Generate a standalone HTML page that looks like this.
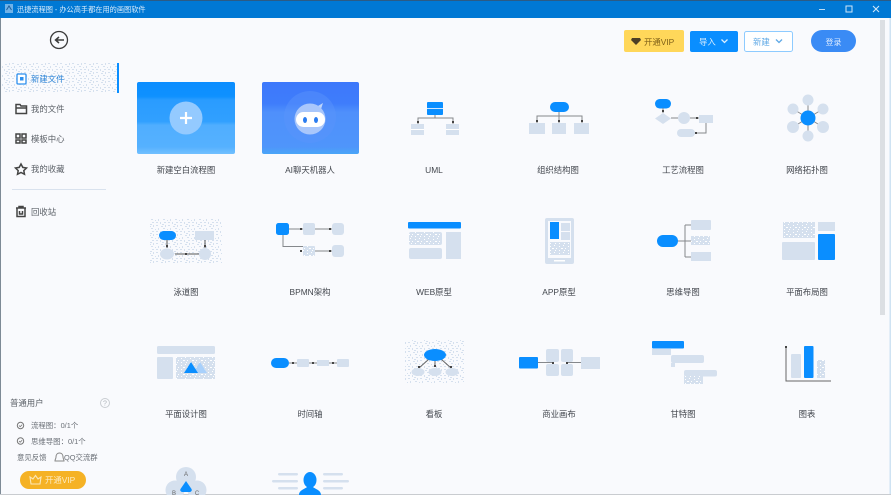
<!DOCTYPE html>
<html lang="zh"><head><meta charset="utf-8"><title>迅捷流程图</title>
<style>
html,body{margin:0;padding:0;width:891px;height:495px;overflow:hidden;background:#f9fafd}
svg{display:block;font-family:"Liberation Sans","Noto Sans CJK SC",sans-serif;filter:blur(.35px)}
.l{font-size:8.400px;fill:#43474e;text-anchor:middle}
.n{font-size:8.400px;fill:#5d6269}
.s{font-size:7.400px;fill:#6b7077}
.b{fill:#d5e0ee}.a{fill:#0a8eff}
.w{stroke:#85888c;stroke-width:1;fill:none}
</style></head><body>
<svg width="891" height="495" viewBox="0 0 891 495" xmlns="http://www.w3.org/2000/svg">
<defs>
<pattern id="d" width="12" height="9" patternUnits="userSpaceOnUse">
<rect width="12" height="9" fill="#f9fafd"/>
<path d="M0 0h2v1H0zM5 1h2v1H5zM9 0h1v2H9zM2 3h1v2H2zM7 3h2v1H7zM11 4h1v1h-1zM0 6h2v1H0zM4 6h1v2H4zM8 6h2v1H8zM6 8h2v1H6z" fill="#d5e0ee"/>
</pattern>
<pattern id="e" width="9" height="7" patternUnits="userSpaceOnUse">
<rect width="9" height="7" fill="#d5e0ee"/>
<path d="M1 1h1v1H1zM5 0h1v1H5zM3 3h2v1H3zM7 3h1v1H7zM1 5h1v1H1zM6 5h1v1H6z" fill="#fff"/>
</pattern>
<linearGradient id="g1" x1="0" y1="0" x2="0" y2="1">
<stop offset="0" stop-color="#0b8dff"/><stop offset=".2" stop-color="#0f91ff"/><stop offset=".25" stop-color="#2a9cff"/><stop offset=".55" stop-color="#31a0ff"/><stop offset=".6" stop-color="#50aeff"/><stop offset=".9" stop-color="#55b1ff"/><stop offset="1" stop-color="#72c0ff"/>
</linearGradient>
<linearGradient id="g2" x1="0" y1="0" x2="0" y2="1">
<stop offset="0" stop-color="#3d78fb"/><stop offset=".3" stop-color="#3f7dfb"/><stop offset=".42" stop-color="#4f90fb"/><stop offset=".9" stop-color="#4f95fb"/><stop offset="1" stop-color="#4aa6f8"/>
</linearGradient>
</defs>

<rect width="891" height="495" fill="#f9fafd"/>
<!-- title bar -->
<rect width="891" height="18" fill="#0078d4"/>
<rect width="891" height="1" fill="#2b5b85"/>
<rect x="5" y="4" width="8" height="9" fill="#6fb2e8"/>
<path d="M6.500 10l2.500-4 2.500 4" stroke="#1e5f9c" fill="none"/>
<text x="17" y="12" font-size="7.200" fill="#d7ebfb">迅捷流程图 - 办公高手都在用的画图软件</text>
<rect x="819" y="9" width="6" height="1" fill="#b9dbf4"/>
<rect x="846" y="6" width="6" height="6" fill="none" stroke="#cfe6f8"/>
<path d="M873 6l6 6M879 6l-6 6" stroke="#cfe6f8" stroke-width="1.100"/>
<rect x="0" y="18" width="1" height="477" fill="#7d8a96"/>
<rect x="889.500" y="18" width="1.500" height="477" fill="#cfe3f3"/>
<rect x="0" y="494" width="891" height="1" fill="#c9ccd0"/>

<!-- scrollbar -->
<rect x="880" y="20" width="5" height="295" fill="#dcdfe3"/>

<!-- back -->
<circle cx="59" cy="40" r="8.500" fill="none" stroke="#3c3c3c" stroke-width="1.300"/>
<path d="M64 40h-8M59 37l-3.500 3 3.500 3" fill="none" stroke="#3c3c3c" stroke-width="1.500"/>

<!-- sidebar -->
<rect x="2" y="63" width="115" height="30" fill="url(#d)"/>
<rect x="117" y="63" width="2" height="30" fill="#0a8eff"/>
<rect x="17" y="74" width="9" height="10" rx="1" fill="#fff" stroke="#2c8fee" stroke-width="1.300"/>
<rect x="20" y="77" width="3.500" height="3.500" fill="#2c8fee"/>
<text x="31" y="82" class="n" style="fill:#2f86d8">新建文件</text>

<path d="M16 104.500h4l1 1.500h5.500v7.500H16z M16 108h10.500" fill="none" stroke="#444" stroke-width="1.500"/>
<text x="31" y="112" class="n">我的文件</text>

<path d="M16 134h4v4h-4zM22 134h4v4h-4zM16 140h4v3h-4zM22 140h4v3h-4z" fill="none" stroke="#444" stroke-width="1.500"/>
<text x="31" y="142" class="n">模板中心</text>

<path d="M21 164l1.800 3.400 3.700.6-2.700 2.600.7 3.700-3.500-1.800-3.500 1.800.7-3.700-2.700-2.600 3.700-.6z" fill="none" stroke="#444" stroke-width="1.500"/>
<text x="31" y="172" class="n">我的收藏</text>

<rect x="12" y="189" width="94" height="1" fill="#d9e2ee"/>

<path d="M16 208h10M19 208v-1.500h4v1.500M17 208.500v8h8v-8M19.500 211v3h3v-3" fill="none" stroke="#444" stroke-width="1.500"/>
<text x="31" y="215" class="n">回收站</text>

<!-- sidebar bottom -->
<text x="10" y="406" class="n">普通用户</text>
<circle cx="105" cy="403" r="4.500" fill="none" stroke="#c9cdd2"/>
<text x="105" y="405.500" font-size="7" fill="#aeb3b9" text-anchor="middle">?</text>
<circle cx="20.500" cy="425.500" r="3.200" fill="none" stroke="#777"/>
<path d="M19 425.500l1.200 1.200 2-2" fill="none" stroke="#777" stroke-width=".8"/>
<text x="31" y="428" class="s">流程图：0/1个</text>
<circle cx="20.500" cy="441" r="3.200" fill="none" stroke="#777"/>
<path d="M19 441l1.200 1.200 2-2" fill="none" stroke="#777" stroke-width=".8"/>
<text x="31" y="444" class="s">思维导图：0/1个</text>
<text x="17" y="460" class="s">意见反馈</text>
<path d="M55 461c0-2 1-2 1-4s1-4 3.500-4 3.500 2 3.500 4 1 2 1 4z" fill="none" stroke="#888"/>
<text x="64" y="460" class="s">QQ交流群</text>
<rect x="20" y="471" width="66" height="18" rx="9" fill="#f5b225"/>
<path d="M30 477l3 2 2.500-3.500 2.500 3.500 3-2-1 7h-9z" fill="none" stroke="#fbe7b6" stroke-width="1.100"/>
<text x="45" y="483" font-size="8.400" fill="#fdebc0">开通VIP</text>

<!-- top buttons -->
<rect x="624" y="30" width="60" height="22" rx="2" fill="#ffd75a"/>
<path d="M632 38h8l1 2-5 5-5-5z" fill="#4d3f25"/>
<text x="644" y="45" font-size="8.400" fill="#806118">开通VIP</text>
<rect x="690" y="31" width="48" height="21" rx="2" fill="#0a8eff"/>
<text x="699" y="45" font-size="8.400" fill="#d9eeff">导入</text>
<path d="M721.500 39.500l3 3 3-3" fill="none" stroke="#d9eeff" stroke-width="1.300"/>
<rect x="744.500" y="31.500" width="48" height="20" rx="2" fill="#fff" stroke="#8ecbff"/>
<text x="753" y="45" font-size="8.400" fill="#5fa9e6">新建</text>
<path d="M776 39.500l3 3 3-3" fill="none" stroke="#5fa9e6" stroke-width="1.300"/>
<rect x="811" y="30" width="45" height="22" rx="11" fill="#3a8bf5"/>
<text x="833.500" y="45" font-size="8" fill="#dcebff" text-anchor="middle">登录</text>

<!-- cards -->
<rect x="137" y="82" width="98" height="72" rx="2" fill="url(#g1)"/>
<circle cx="186" cy="118" r="16.500" fill="#94caff"/>
<path d="M186 112v12M180 118h12" stroke="#fff" stroke-width="2.200"/>
<text x="186" y="173" class="l">新建空白流程图</text>

<rect x="262" y="82" width="97" height="72" rx="2" fill="url(#g2)"/>
<circle cx="310" cy="117" r="26" fill="#5b94fb" opacity=".45"/>
<path d="M318 106l5-3-2 6z" fill="#bcd4fb"/>
<circle cx="310" cy="119" r="15.500" fill="#a9c7fb"/>
<rect x="296" y="112" width="29" height="15" rx="7.500" fill="#fff"/>
<ellipse cx="305" cy="120" rx="2" ry="3" fill="#2a7cf0"/>
<ellipse cx="316" cy="120" rx="2" ry="3" fill="#2a7cf0"/>
<text x="310" y="173" class="l">AI聊天机器人</text>

<!-- UML -->
<rect x="427" y="102" width="16" height="13" rx="1" class="a"/>
<rect x="427" y="108" width="16" height="1" fill="#cfe6ff"/>
<path class="w" d="M435 115v3M418 124v-6h35v6"/>
<rect x="411" y="124" width="13" height="11" class="b"/><rect x="411" y="129" width="13" height="1" fill="#fff"/>
<rect x="446" y="124" width="13" height="11" class="b"/><rect x="446" y="129" width="13" height="1" fill="#fff"/>
<text x="434" y="173" class="l">UML</text>

<!-- Org -->
<rect x="550" y="102" width="19" height="10" rx="5" class="a"/>
<path class="w" d="M559 112v4M537 123v-7h45v7M559 116v7"/>
<rect x="529" y="123" width="16" height="11" class="b"/>
<rect x="552" y="123" width="14" height="11" class="b"/>
<rect x="574" y="123" width="15" height="11" class="b"/>
<text x="558" y="173" class="l">组织结构图</text>

<!-- Process -->
<rect x="655" y="99" width="16" height="9.500" rx="4.700" class="a"/>
<path class="w" d="M663 108v5M671 118h7M690 118h9M706 122v11h-11"/>
<path d="M663 113l8 5.500-8 5.500-8-5.500z" class="b"/>
<circle cx="684" cy="118" r="6" class="b"/>
<rect x="699" y="115" width="14" height="8" class="b"/>
<rect x="677" y="129" width="18" height="8" rx="4" class="b"/>
<text x="683" y="173" class="l">工艺流程图</text>

<!-- Network -->
<path class="w" d="M808 118L808 100M808 118L793 109M808 118L823 109M808 118L793 127M808 118L823 127M808 118L808 136"/>
<circle cx="808" cy="100" r="5.500" class="b"/><circle cx="793" cy="109" r="5.500" class="b"/><circle cx="823" cy="109" r="5.500" class="b"/>
<circle cx="793" cy="127" r="6" class="b"/><circle cx="823" cy="127" r="6" class="b"/><circle cx="808" cy="136" r="5.500" class="b"/>
<circle cx="808" cy="118" r="7.500" class="a"/>
<text x="807" y="173" class="l">网络拓扑图</text>

<!-- Swimlane -->
<rect x="150" y="218" width="72" height="46" fill="url(#d)"/>
<rect x="159" y="231" width="17" height="9" rx="4.500" class="a"/>
<rect x="195" y="231" width="19" height="9" class="b"/>
<path d="M167 240v8M205 240v8M175 254h24" stroke="#555" fill="none"/>
<ellipse cx="167" cy="254" rx="7" ry="5.500" class="b"/>
<circle cx="205" cy="254" r="6" class="b"/>
<text x="186" y="295" class="l">泳道图</text>

<!-- BPMN -->
<rect x="276" y="223" width="13" height="12" rx="2.500" class="a"/>
<path class="w" d="M289 229h14M315 229h17M283 235v11.500h20M315 251h17"/>
<rect x="303" y="223" width="12" height="12" rx="2" class="b"/>
<rect x="332" y="223" width="12" height="12" rx="3" class="b"/>
<rect x="303" y="246" width="12" height="10" rx="1" fill="url(#e)"/>
<rect x="332" y="245" width="12" height="12" rx="3" class="b"/>
<text x="310" y="295" class="l">BPMN架构</text>

<!-- WEB -->
<rect x="408" y="222" width="53" height="6.500" rx="1" class="a"/>
<rect x="409" y="232" width="33" height="13" rx="2" fill="url(#e)"/>
<rect x="409" y="248" width="33" height="11" rx="2" class="b"/>
<rect x="446" y="232" width="15" height="27" class="b"/>
<text x="434" y="295" class="l">WEB原型</text>

<!-- APP -->
<rect x="545" y="218" width="29" height="46" rx="2" class="b"/>
<rect x="548" y="221" width="23" height="37" fill="#f9fafd"/>
<rect x="550" y="222" width="9" height="17" class="a"/>
<rect x="561" y="223" width="9" height="8" class="b"/>
<rect x="561" y="232" width="9" height="8" class="b"/>
<rect x="550" y="242" width="20" height="13" fill="url(#e)"/>
<rect x="554" y="260" width="11" height="1.500" fill="#fff"/>
<text x="559" y="295" class="l">APP原型</text>

<!-- Mind -->
<path class="w" d="M678 241h13M685 225v32M685 225h6M685 257h6"/>
<rect x="657" y="235" width="21" height="12" rx="6" class="a"/>
<rect x="691" y="220" width="20" height="10" rx="1" class="b"/>
<rect x="691" y="236" width="19" height="9" fill="url(#e)"/>
<rect x="691" y="252" width="20" height="9" class="b"/>
<text x="683" y="295" class="l">思维导图</text>

<!-- Layout -->
<rect x="783" y="222" width="32" height="16" fill="url(#e)"/>
<rect x="782" y="242" width="33" height="18" rx="1" class="b"/>
<rect x="818" y="222" width="17" height="9" class="b"/>
<rect x="818" y="234" width="17" height="26" rx="1" class="a"/>
<text x="807" y="295" class="l">平面布局图</text>

<!-- Design -->
<rect x="157" y="346" width="58" height="8" rx="1.500" class="b"/>
<rect x="157" y="357" width="16" height="22" rx="1" class="b"/>
<rect x="176" y="357" width="39" height="22" fill="url(#e)"/>
<path d="M200 362l7 11h-14z" fill="#a8d0fb"/>
<path d="M191 362l7 11h-14z" class="a"/>
<text x="186" y="417" class="l">平面设计图</text>

<!-- Timeline -->
<path class="w" d="M289 363h48"/>
<rect x="271" y="358" width="18" height="10" rx="5" class="a"/>
<rect x="297" y="359" width="12" height="8" rx="1" class="b"/>
<rect x="317" y="360" width="12" height="6" class="b"/>
<rect x="337" y="359" width="12" height="8" rx="1" class="b"/>
<text x="310" y="417" class="l">时间轴</text>

<!-- Kanban -->
<rect x="405" y="340" width="59" height="43" fill="url(#d)"/>
<path d="M429 359l-10 9M435 360v7M441 359l10 9" stroke="#666" fill="none"/>
<ellipse cx="435" cy="355" rx="11" ry="6" class="a"/>
<ellipse cx="418" cy="372" rx="6.500" ry="4" class="b"/>
<ellipse cx="435" cy="372" rx="6.500" ry="4" class="b"/>
<ellipse cx="452" cy="372" rx="6.500" ry="4" class="b"/>
<text x="434" y="417" class="l">看板</text>

<!-- Business -->
<rect x="519" y="357" width="19" height="11.500" rx="1" class="a"/>
<rect x="546" y="349" width="13" height="13" rx="2" class="b"/>
<rect x="561" y="349" width="12" height="13" rx="2" class="b"/>
<rect x="546" y="364" width="13" height="12" rx="2" class="b"/>
<rect x="561" y="364" width="12" height="12" rx="2" class="b"/>
<path class="w" d="M538 362.500h15M566 362.500h15"/>
<rect x="581" y="357" width="19" height="12" class="b"/>
<text x="559" y="417" class="l">商业画布</text>

<!-- Gantt -->
<rect x="652" y="341" width="32" height="7.500" rx="1" class="a"/>
<rect x="652" y="349" width="19" height="6" class="b"/>
<rect x="671" y="355" width="33" height="8" rx="2" class="b"/>
<rect x="671" y="363" width="4" height="4" class="b"/>
<rect x="684" y="370" width="33" height="6.500" rx="2" class="b"/>
<rect x="684" y="376" width="19" height="8" fill="url(#e)"/>
<text x="683" y="417" class="l">甘特图</text>

<!-- Chart -->
<path d="M786 346v35h45" stroke="#666" fill="none"/>
<rect x="791" y="354" width="10" height="24" rx="1" class="b"/>
<rect x="804" y="346" width="9.500" height="32" rx="1" class="a"/>
<rect x="817" y="360" width="8" height="18" fill="url(#e)"/>
<text x="807" y="417" class="l">图表</text>

<!-- arrow heads -->
<path fill="#444" d="M417 121h2v2h-2zM452 121h2v2h-2zM536 120h2v2h-2zM558 120h2v2h-2zM581 120h2v2h-2zM662 110h2v2h-2zM696 117h2v2h-2zM695 132h2v2h-2zM300 228h2v2h-2zM329 228h2v2h-2zM300 250h2v2h-2zM329 250h2v2h-2zM166 245h2v2h-2zM204 245h2v2h-2zM185 253h2v2h-2zM292 362h2v2h-2zM312 362h2v2h-2zM332 362h2v2h-2zM418 366h2v2h-2zM434 365h2v2h-2zM450 366h2v2h-2zM552 362h2v2h-2zM566 362h2v2h-2zM785 346h2v2h-2z"/>

<!-- Venn -->
<circle cx="186" cy="477" r="10" class="b"/>
<circle cx="175" cy="490" r="9.500" class="b"/>
<circle cx="197" cy="490" r="9.500" class="b"/>
<path d="M186 481l5.500 8c1 2-1 3-2 3h-7c-1 0-3-1-2-3z" class="a"/>
<text x="186" y="476" font-size="6" fill="#666" text-anchor="middle">A</text>
<text x="174" y="495" font-size="6" fill="#666" text-anchor="middle">B</text>
<text x="197" y="495" font-size="6" fill="#666" text-anchor="middle">C</text>

<!-- Person -->
<rect x="278" y="473" width="20" height="2.500" rx="1.200" class="b"/>
<rect x="272" y="480" width="26" height="2.500" rx="1.200" class="b"/>
<rect x="278" y="487" width="20" height="2.500" rx="1.200" class="b"/>
<rect x="323" y="473" width="20" height="2.500" rx="1.200" class="b"/>
<rect x="323" y="480" width="26" height="2.500" rx="1.200" class="b"/>
<rect x="323" y="487" width="20" height="2.500" rx="1.200" class="b"/>
<ellipse cx="310" cy="480" rx="6.500" ry="8" class="a"/>
<path d="M299 495c0-5 6-6 8-8h6c2 2 8 3 8 8z" class="a"/>
</svg>
</body></html>
